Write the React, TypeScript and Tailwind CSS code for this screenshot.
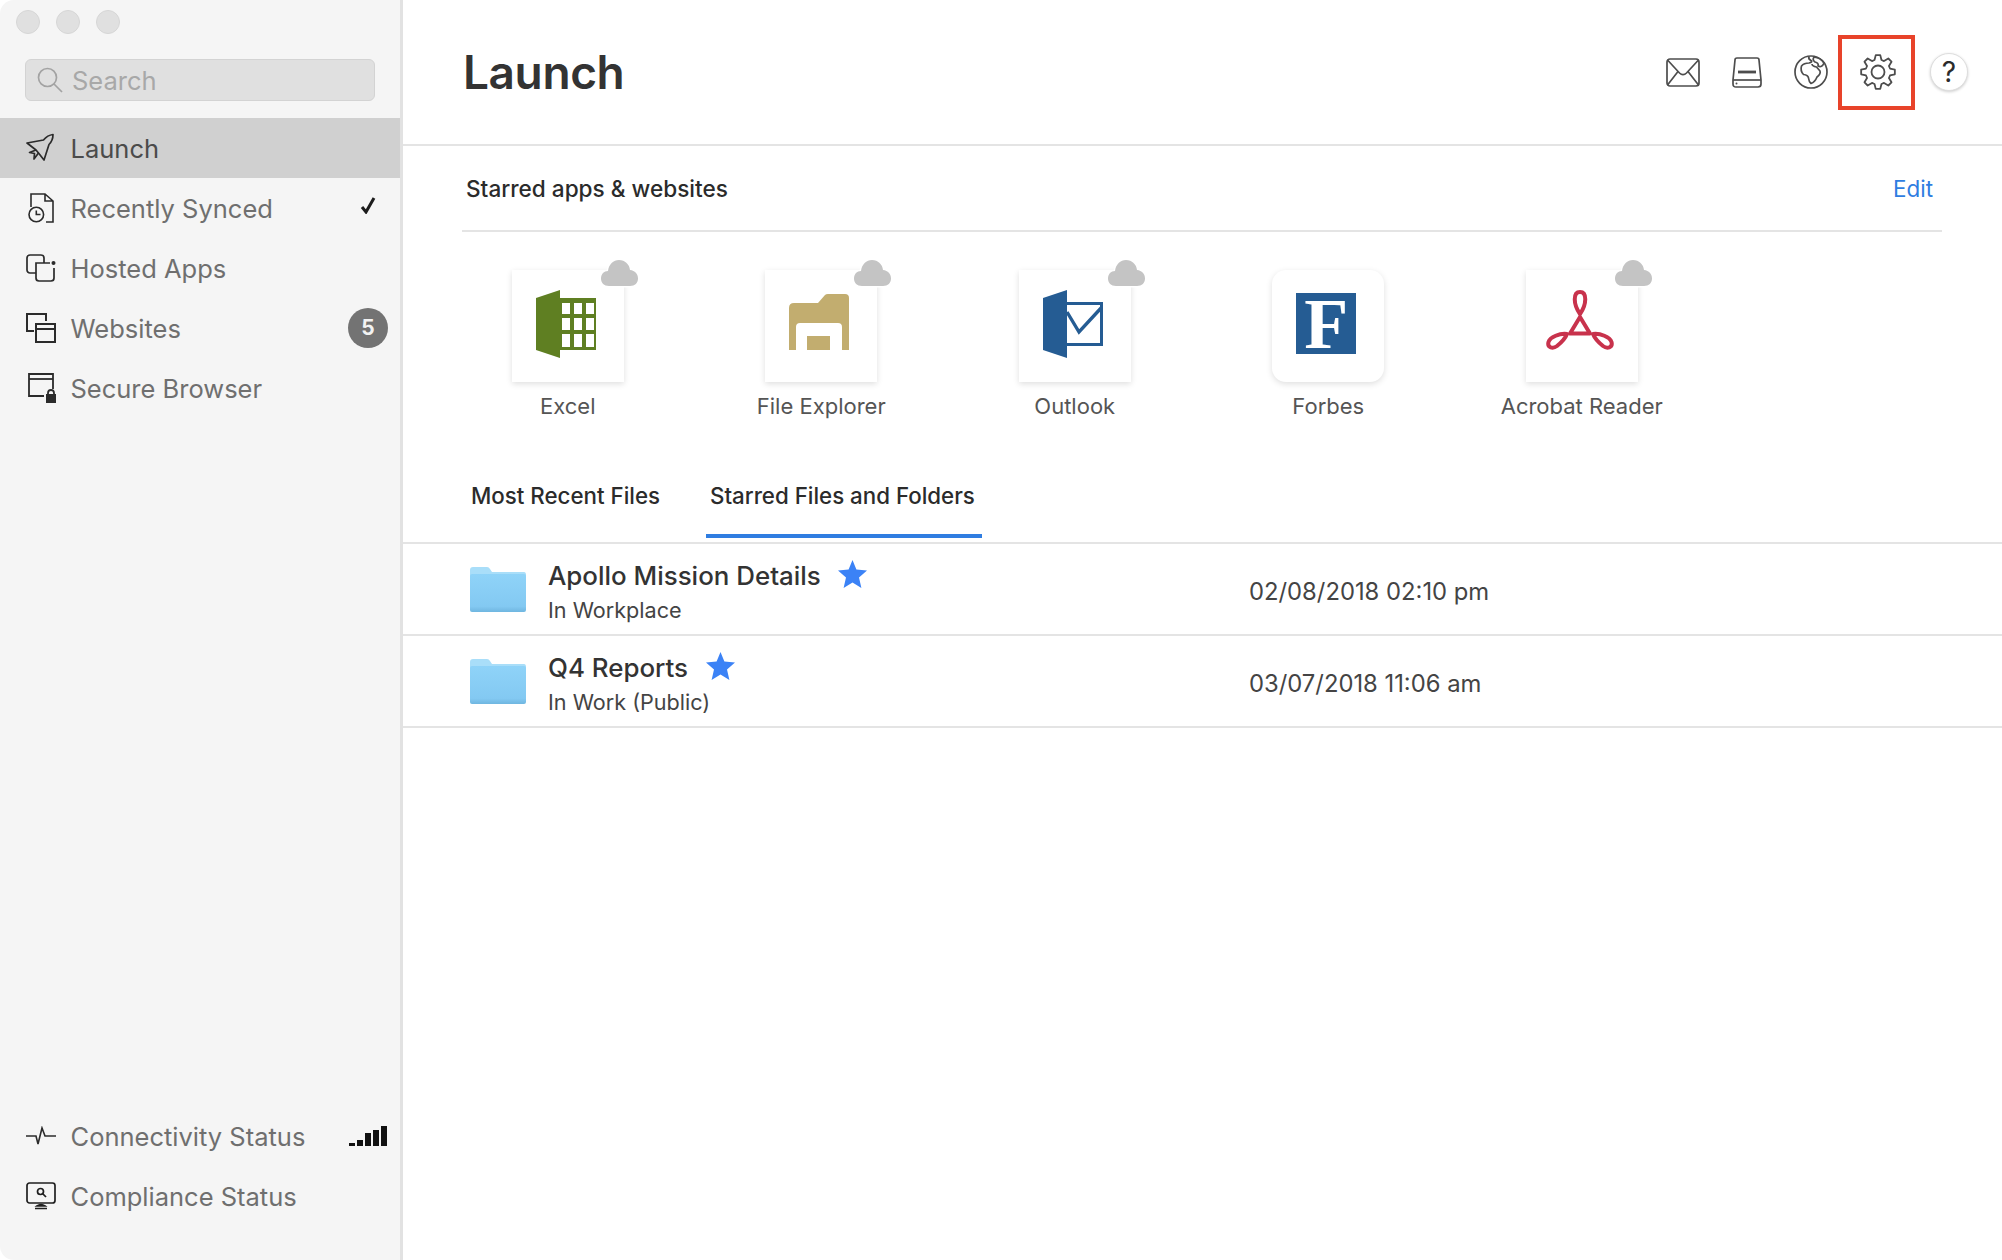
import React from "react";

const font = { fontFamily: "Inter, 'Noto Sans', sans-serif" };

function gearPath(cx: number, cy: number, outer: number, inner: number, teeth: number) {
  const pts: string[] = [];
  const step = (Math.PI * 2) / teeth;
  for (let i = 0; i < teeth; i++) {
    const a = i * step - Math.PI / 2;
    const corners = [
      [inner, a - step * 0.36],
      [outer, a - step * 0.17],
      [outer, a + step * 0.17],
      [inner, a + step * 0.36],
    ];
    corners.forEach(([r, t]) => {
      pts.push(`${(cx + r * Math.cos(t)).toFixed(2)} ${(cy + r * Math.sin(t)).toFixed(2)}`);
    });
  }
  return "M" + pts.join("L") + "Z";
}

const RocketIcon = () => (
  <svg width="30" height="30" viewBox="0 0 30 30" fill="none" stroke="#2b2b2b" strokeWidth="1.7" strokeLinejoin="round">
    <path d="M27 1.5 C23 2 20 4 17.5 7 L1 10 L10 17 L12.5 20 L18 27 L23 11.5 C25.5 9 27 5.5 27 1.5 Z" />
    <path d="M10 17 L3.5 19.5 L8.5 20.5 L8 26 L12.5 20" />
  </svg>
);
const SyncedIcon = () => (
  <svg width="30" height="30" viewBox="0 0 30 30" fill="none" stroke="#2b2b2b" strokeWidth="1.6">
    <path d="M5 14 V1 H19 L27 8 V29 H20 M19 1 V8 H27" />
    <circle cx="10.3" cy="21.5" r="7.3" />
    <path d="M10.3 17.5 V21.5 H14.5" />
  </svg>
);
const HostedIcon = () => (
  <svg width="30" height="28" viewBox="0 0 30 28" fill="none" stroke="#2b2b2b" strokeWidth="1.7">
    <path d="M10 19 H4 A3 3 0 0 1 1 16 V4 A3 3 0 0 1 4 1 H15 A3 3 0 0 1 18 4 V9" />
    <path d="M24 9 H10 V24 A3 3 0 0 0 13 27 H25 A3 3 0 0 0 28 24 V14" />
    <circle cx="27.5" cy="9" r="2" fill="#2b2b2b" stroke="none" />
  </svg>
);
const WebsitesIcon = () => (
  <svg width="30" height="30" viewBox="0 0 30 30" fill="none" stroke="#2b2b2b" strokeWidth="2">
    <path d="M8 18 H1 V1 H20 V8" />
    <rect x="10" y="11" width="19" height="18" />
    <path d="M10 16 H29" />
  </svg>
);
const SecureIcon = () => (
  <svg width="30" height="30" viewBox="0 0 30 30" fill="none" stroke="#2b2b2b" strokeWidth="1.8">
    <path d="M18 23 H3 V1 H27 V16" />
    <path d="M3 6 H27" />
    <rect x="20" y="21" width="10" height="9" fill="#2b2b2b" stroke="none" />
    <path d="M22 22 V20 A3 3 0 0 1 28 20 V22" />
  </svg>
);
const PulseIcon = () => (
  <svg width="30" height="20" viewBox="0 0 30 20" fill="none" stroke="#2b2b2b" strokeWidth="1.6">
    <path d="M0 10 H10 L12 18 L16 2 L19 10 H30" />
  </svg>
);
const ComplianceIcon = () => (
  <svg width="30" height="28" viewBox="0 0 30 28" fill="none" stroke="#1f1f1f" strokeWidth="1.7">
    <rect x="1" y="1" width="28" height="20" rx="2.5" />
    <circle cx="14.5" cy="9.5" r="3" />
    <path d="M17 12 L20 15" />
    <path d="M11 24 Q15 21 19 24 Z M9 26.5 H21" fill="#1f1f1f" />
  </svg>
);

const Cloud = () => (
  <svg width="41" height="30" viewBox="-2 -2 41 30" className="absolute top-[-12px] left-[87px]">
    <path
      d="M8 26 C3 26 0 23 0 18.5 C0 14 3 11 7 11 C7.5 4.5 12.5 0 18 0 C24 0 28.5 4.5 29 10 C34 10.5 37 14 37 18.5 C37 23 34 26 29 26 Z"
      fill="#c4c4c4"
      stroke="#ffffff"
      strokeWidth="3"
      paintOrder="stroke"
    />
  </svg>
);

const ExcelIcon = () => (
  <svg width="60" height="68" viewBox="0 0 60 68" fill="#5f7f22">
    <path d="M0 8 L24 0 V68 L0 60 Z" />
    <path
      fillRule="evenodd"
      d="M24 8 H60 V60 H24 Z M26 13 V24 H34 V13 Z M38 13 V24 H46 V13 Z M50 13 V24 H58 V13 Z M26 28 V40 H34 V28 Z M38 28 V40 H46 V28 Z M50 28 V40 H58 V28 Z M26 44 V57 H34 V44 Z M38 44 V57 H46 V44 Z M50 44 V57 H58 V44 Z"
    />
  </svg>
);
const ExplorerIcon = () => (
  <svg width="60" height="56" viewBox="0 0 60 56" fill="#c2ad6f">
    <path d="M0 56 V14 Q0 9 5 9 H29 L36 1 Q37 0 39 0 H56 Q60 0 60 4 V56 H53 V33 Q53 29 49 29 H11 Q7 29 7 33 V56 Z" />
    <rect x="18" y="42" width="23" height="14" />
  </svg>
);
const OutlookIcon = () => (
  <svg width="60" height="68" viewBox="0 0 60 68" fill="none">
    <path d="M0 8 L24 0 V68 L0 60 Z" fill="#255c93" />
    <path d="M24 13.5 H58.5 V54.5 H24" stroke="#255c93" strokeWidth="3" />
    <path d="M24 22 L36 42 L59 17" stroke="#255c93" strokeWidth="3.4" />
  </svg>
);
const AcrobatIcon = () => (
  <svg width="68" height="60" viewBox="0 0 68 60" fill="none" stroke="#c8324c" strokeWidth="4" strokeLinejoin="round">
    <path d="M34 24 C27 14 27 2 34 2 C41 2 41 14 34 24 Z" />
    <path d="M34 27 L24 43.5 H44 Z" />
    <path d="M21 44 C14 43 4 47 2.5 52 C1 58 7 59 11 56 C16 52 19 49 21 44 Z" />
    <path d="M47 44 C54 43 64 47 65.5 52 C67 58 61 59 57 56 C52 52 49 49 47 44 Z" />
  </svg>
);

const FolderIcon = () => (
  <svg width="56" height="45" viewBox="0 0 56 45">
    <defs>
      <linearGradient id="folderFill" x1="0" y1="0" x2="0" y2="1">
        <stop offset="0" stopColor="#8fd3f8" />
        <stop offset="0.85" stopColor="#83c9f2" />
        <stop offset="1" stopColor="#6fb6e0" />
      </linearGradient>
    </defs>
    <path d="M0 3 Q0 0 3 0 H17 Q19 0 20 2 L22 5 H54 Q56 5 56 8 V20 H0 Z" fill="#a9def9" />
    <path d="M0 9 Q0 7 2 7 H54 Q56 7 56 9 V43 Q56 45 54 45 H2 Q0 45 0 43 Z" fill="url(#folderFill)" />
  </svg>
);

const Star = () => (
  <svg width="29" height="28" viewBox="0 0 29 28" fill="#3b82f6">
    <path d="M14.5 0 L18.4 9.6 L29 10.5 L21 17.4 L23.4 28 L14.5 22.4 L5.6 28 L8 17.4 L0 10.5 L10.6 9.6 Z" />
  </svg>
);

const navItems = [
  { label: "Launch", icon: <RocketIcon />, active: true },
  { label: "Recently Synced", icon: <SyncedIcon />, check: true },
  { label: "Hosted Apps", icon: <HostedIcon /> },
  { label: "Websites", icon: <WebsitesIcon />, badge: "5" },
  { label: "Secure Browser", icon: <SecureIcon /> },
];

const apps = [
  { name: "Excel", icon: <ExcelIcon />, cloud: true, nudge: "mb-[4px] mr-[4px]" },
  { name: "File Explorer", icon: <ExplorerIcon />, cloud: true, nudge: "mb-[8px] mr-[4px]" },
  { name: "Outlook", icon: <OutlookIcon />, cloud: true, nudge: "mb-[4px] mr-[4px]" },
  {
    name: "Forbes",
    cloud: false,
    nudge: "mb-[5px] mr-[4px]",
    icon: (
      <div className="flex h-[61px] w-[60px] items-center justify-center bg-[#255c93] text-[72px] font-bold leading-none text-white" style={{ fontFamily: "'Liberation Serif', serif" }}>
        F
      </div>
    ),
  },
  { name: "Acrobat Reader", icon: <AcrobatIcon />, cloud: true, nudge: "mb-[12px] mr-[4px]" },
];

const files = [
  { title: "Apollo Mission Details", where: "In Workplace", date: "02/08/2018 02:10 pm", starGap: "ml-[17px]" },
  { title: "Q4 Reports", where: "In Work (Public)", date: "03/07/2018 11:06 am", starGap: "ml-[18px]" },
];

function Sidebar() {
  return (
    <aside className="flex h-[1260px] w-[403px] shrink-0 flex-col overflow-hidden rounded-l-[14px] border-r-[3px] border-[#e2e2e2] bg-[#f5f5f5]">
      <div className="flex gap-4 pl-4 pt-[10px]">
        <span className="h-6 w-6 rounded-full border border-[#d6d6d6] bg-[#e0e0e0]" />
        <span className="h-6 w-6 rounded-full border border-[#d6d6d6] bg-[#e0e0e0]" />
        <span className="h-6 w-6 rounded-full border border-[#d6d6d6] bg-[#e0e0e0]" />
      </div>
      <div className="ml-[25px] mt-[25px] flex h-[42px] w-[350px] items-center rounded-[6px] border border-[#d3d3d3] bg-[#e0e0e0] pl-[11px]">
        <svg width="26" height="26" viewBox="0 0 26 26" fill="none" stroke="#a3a3a3" strokeWidth="1.7">
          <circle cx="10.5" cy="10.5" r="9" />
          <path d="M17 17 L25 25" />
        </svg>
        <span className="ml-[9px] pt-[3px] text-[25.5px] text-[#a8a8a8]">Search</span>
      </div>
      <nav className="mt-[17px]">
        {navItems.map((item) => (
          <div key={item.label} className={`flex h-[60px] items-center pr-3 ${item.active ? "bg-[#d0d0d0]" : ""}`}>
            <span className="flex w-[70.5px] justify-start pl-[26px]">{item.icon}</span>
            <span className={`pt-[3px] text-[25.5px] ${item.active ? "text-[#4b4b4b]" : "text-[#6f6f6f]"}`}>{item.label}</span>
            {item.check && (
              <svg width="16" height="17" viewBox="0 0 16 17" fill="none" stroke="#1c1c1c" strokeWidth="3" className="mb-[6px] ml-auto mr-[12px]">
                <path d="M2 10 L6 15 L14 1" />
              </svg>
            )}
            {item.badge && (
              <span className="ml-auto flex h-10 w-10 items-center justify-center rounded-full bg-[#737373] text-[21px] font-bold text-[#f2f2f2]">{item.badge}</span>
            )}
          </div>
        ))}
      </nav>
      <div className="mt-auto pb-[34px]">
        <div className="flex h-[60px] items-center pr-3">
          <span className="flex w-[70.5px] justify-start pl-[26px]"><PulseIcon /></span>
          <span className="pt-[3px] text-[25.5px] text-[#6f6f6f]">Connectivity Status</span>
          <span className="mb-[1px] ml-auto mr-[1px] flex h-5 items-end gap-[2px]">
            <span className="h-[3px] w-[6px] bg-[#111]" />
            <span className="h-[6px] w-[6px] bg-[#111]" />
            <span className="h-[13px] w-[6px] bg-[#111]" />
            <span className="h-[16px] w-[6px] bg-[#111]" />
            <span className="h-[20px] w-[6px] bg-[#111]" />
          </span>
        </div>
        <div className="flex h-[60px] items-center pr-3">
          <span className="flex w-[70.5px] justify-start pl-[26px]"><ComplianceIcon /></span>
          <span className="pt-[3px] text-[25.5px] text-[#6f6f6f]">Compliance Status</span>
        </div>
      </div>
    </aside>
  );
}

function Header() {
  return (
    <header className="flex h-[146px] items-center border-b-2 border-[#e4e4e4] pl-[60px] pr-[34px]">
      <h1 className="text-[46px] font-semibold tracking-[-0.4px] text-[#333]">Launch</h1>
      <div className="ml-auto flex items-center">
        <svg width="34" height="29" viewBox="0 0 34 29" fill="none" stroke="#4d4d4d" strokeWidth="1.7">
          <rect x="1" y="1" width="32" height="27" rx="3" />
          <path d="M1.5 2 L13.5 15 Q17 18.5 20.5 15 L32.5 2 M1.5 27 L12 13.5 M32.5 27 L22 13.5" />
        </svg>
        <svg width="30" height="31" viewBox="0 0 30 31" fill="none" stroke="#4d4d4d" strokeWidth="1.7" className="ml-8">
          <path d="M5 1 H25 Q27 1 27 3 L29 23 V27 Q29 30 26 30 H4 Q1 30 1 27 V23 L3 3 Q3 1 5 1 Z" />
          <path d="M1 23 H29" />
          <path d="M6 15 H24" strokeWidth="2.8" />
          <circle cx="4.5" cy="26.5" r="1" fill="#4d4d4d" stroke="none" />
        </svg>
        <svg width="34" height="34" viewBox="0 0 34 34" fill="none" stroke="#4d4d4d" strokeWidth="1.7" strokeLinejoin="round" className="ml-8">
          <circle cx="17" cy="17" r="16" />
          <path d="M15 1.5 Q14 4 17 5.5 Q19 7 15 8 Q10 8 7.5 11 Q6 16 9.5 19.5 Q14 20 14.5 23 Q15 27 17 28.5 Q21 27 23 22 Q27 19 26 16 L22.5 12 Q18 11 18 9" />
          <path d="M20 2 Q27 3 30 8 Q28 13 24 11 Q25 8 21 7 Q18 5 20 2 Z" />
        </svg>
        <div className="ml-[10px] flex h-[75px] w-[77px] items-center justify-center border-4 border-[#e8432a] pl-[2px]">
          <svg width="36" height="36" viewBox="0 0 36 36" fill="none" stroke="#4d4d4d" strokeWidth="1.8" strokeLinejoin="round">
            <path d={gearPath(18, 18, 17, 12.5, 8)} />
            <circle cx="18" cy="18" r="6.5" />
          </svg>
        </div>
        <div className="ml-[15px] flex h-[38px] w-[38px] items-center justify-center rounded-full border border-[#dedede] bg-white text-[28px] text-[#2b2b2b] shadow-[0_1px_3px_rgba(0,0,0,0.2)]">?</div>
      </div>
    </header>
  );
}

function Starred() {
  return (
    <section>
      <div className="ml-[59px] mr-[60px] flex h-[86px] items-center justify-between border-b-2 border-[#e4e4e4] pl-[4px] pr-[9px] pt-[2px]">
        <span className="text-[22.6px] font-medium text-[#2b2b2b]">Starred apps &amp; websites</span>
        <span className="text-[22.4px] text-[#2f7de1]">Edit</span>
      </div>
      <div className="ml-[38px] mt-[38px] flex">
        {apps.map((app) => (
          <div key={app.name} className="flex w-[253.5px] flex-col items-center">
            <div className={`relative flex h-[112px] w-[112px] items-center justify-center bg-white shadow-[0_2px_6px_rgba(0,0,0,0.13)] ${app.cloud ? "" : "rounded-[14px]"}`}>
              <div className={app.nudge}>{app.icon}</div>
              {app.cloud && <Cloud />}
            </div>
            <span className="mt-[11px] text-[22px] leading-[27px] text-[#555]">{app.name}</span>
          </div>
        ))}
      </div>
    </section>
  );
}

function Files() {
  return (
    <section>
      <div className="mt-[60px] flex h-[64px] items-start border-b-2 border-[#e4e4e4] pl-[68px]">
        <div className="h-[58px]">
          <span className="text-[22.3px] font-medium leading-[32px] text-[#2b2b2b]">Most Recent Files</span>
        </div>
        <div className="ml-[46px] h-[58px] w-[276px] border-b-4 border-[#2f7de1] pl-1">
          <span className="text-[22.3px] font-medium leading-[32px] text-[#2b2b2b]">Starred Files and Folders</span>
        </div>
      </div>
      {files.map((file) => (
        <div key={file.title} className="flex h-[92px] items-center border-b-2 border-[#e4e4e4]">
          <div className="flex w-[846px] items-center pl-[67px]">
            <FolderIcon />
            <div className="ml-[22px] flex flex-col pt-[5px]">
              <div className="mb-[2px] flex h-[34px] items-center">
                <span className="text-[25.9px] font-medium leading-[34px] text-[#333]">{file.title}</span>
                <span className={`${file.starGap} -mt-[4px]`}><Star /></span>
              </div>
              <span className="text-[21.6px] leading-[30px] text-[#444]">{file.where}</span>
            </div>
          </div>
          <span className="pt-[5px] text-[23.8px] text-[#444]">{file.date}</span>
        </div>
      ))}
    </section>
  );
}

export default function App() {
  return (
    <div className="flex h-[1260px] w-[2002px] overflow-hidden bg-white" style={font}>
      <Sidebar />
      <main className="flex-1">
        <Header />
        <Starred />
        <Files />
      </main>
    </div>
  );
}
